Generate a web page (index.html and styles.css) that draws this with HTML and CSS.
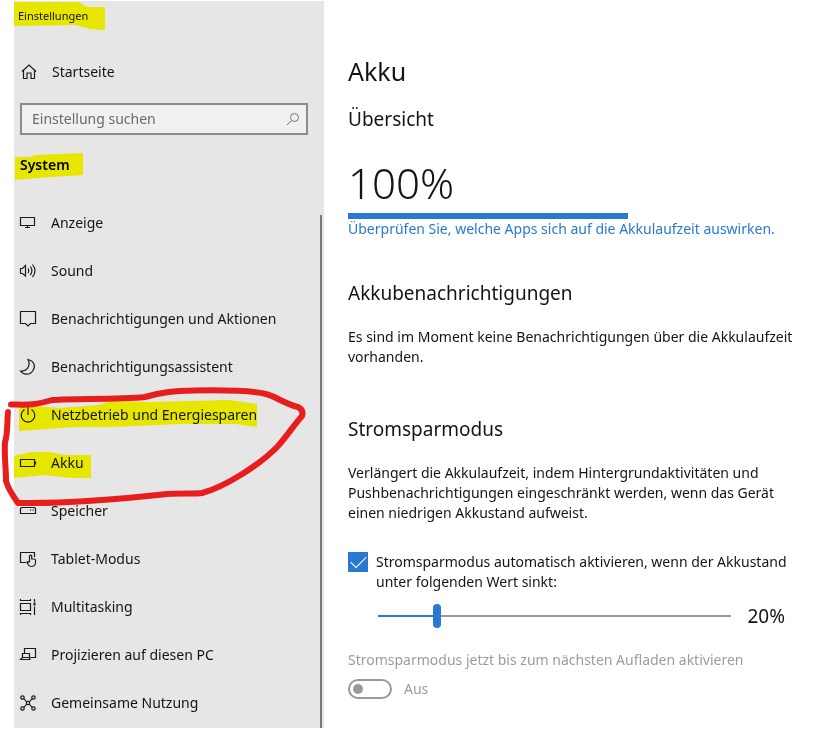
FILE: index.html
```html
<!DOCTYPE html>
<html lang="de">
<head>
<meta charset="utf-8">
<title>Einstellungen</title>
<meta name="viewport" content="width=device-width, initial-scale=1">
<link rel="stylesheet" href="styles.css">
</head>
<body>
<div class="window">
  <aside class="sidebar">
    <div class="app-title">Einstellungen</div>
    <a class="home" href="#">
      <svg class="icon" viewBox="0 0 18 18"><path d="M2 8.500 9 2l7 6.500M3.500 7.500V15.500H7V10h4v5.500h3.500V7.500"/></svg>
      <span>Startseite</span>
    </a>
    <div class="search">
      <input class="search-input" type="search" placeholder="Einstellung suchen" aria-label="Einstellung suchen">
      <svg class="search-icon" viewBox="0 0 14 14"><circle cx="8.500" cy="5.500" r="4"/><path d="M5.500 8.500 1 13"/></svg>
    </div>
    <h2 class="category">System</h2>
    <div class="nav-area">
      <nav class="nav">
        <a class="nav-item" href="#"><svg class="icon" viewBox="0 0 18 18"><path d="M1.500 3.500h14v8h-14zM8.500 11.500v2M6 13.500h5"/></svg><span>Anzeige</span></a>
        <a class="nav-item" href="#"><svg class="icon" viewBox="0 0 18 18"><path d="M1.500 6.500H3.500L6.500 3.500V14L3.500 11.500H1.500zM9 6.500q1.500 2.300 0 4.600M11.300 4.500q3.200 4.300 0 8.600M13.500 2.500q5 6.300 0 12.600"/></svg><span>Sound</span></a>
        <a class="nav-item" href="#"><svg class="icon" viewBox="0 0 18 18"><path d="M1.500 1.500h15v12H11.500L9 16 6.500 13.500H1.500z"/></svg><span>Benachrichtigungen und Aktionen</span></a>
        <a class="nav-item" href="#"><svg class="icon" viewBox="0 0 18 18"><path d="M9 1.500C15 3 17 8 14 12.500C11 17.200 4.500 17.500 1.500 13C8 13.500 12 8 9 1.500z"/></svg><span>Benachrichtigungsassistent</span></a>
        <a class="nav-item" href="#"><svg class="icon" viewBox="0 0 18 18"><path d="M9 1v8M5.500 3.500a6.800 6.800 0 1 0 7 0"/></svg><span>Netzbetrieb und Energiesparen</span></a>
        <a class="nav-item" href="#" aria-current="page"><svg class="icon" viewBox="0 0 18 18"><path d="M1.500 5.500h14v7h-14zM16.500 7.500v3"/></svg><span>Akku</span></a>
        <a class="nav-item" href="#"><svg class="icon" viewBox="0 0 18 18"><path d="M1.500 6.500 2.500 5.500H15.500L16.500 6.500V11.500H1.500zM11.500 7.500v1.200M14 7.500v1.200"/></svg><span>Speicher</span></a>
        <a class="nav-item" href="#"><svg class="icon" viewBox="0 0 18 18"><path d="M7 12.500H1.500v-10h14V7M10.500 12V5.700q1.200-1.200 2.200 0V9h2.800q1 0 1 1.200V13q-.5 3.500-4 3.500-2 0-3-1.500L8 12.200q.8-1.200 2.500.3"/></svg><span>Tablet-Modus</span></a>
        <a class="nav-item" href="#"><svg class="icon" viewBox="0 0 18 18"><path d="M1.500 1v1.500h10V1M1.500 5.500h10v7h-10zM1.500 17v-1.500h10V17M15.500 1v3M15.500 8.500V17"/><path d="M14.500 6h2" class="thick"/></svg><span>Multitasking</span></a>
        <a class="nav-item" href="#"><svg class="icon" viewBox="0 0 18 18"><path d="M5.500 7V2.500h11v9h-5M3.500 7.500h7v4h-7zM3.500 11.500 1.500 13.500h9.500l-.5-2"/></svg><span>Projizieren auf diesen PC</span></a>
        <a class="nav-item" href="#"><svg class="icon" viewBox="0 0 18 18"><circle cx="3.500" cy="3.500" r="1.700"/><circle cx="14.500" cy="3.500" r="1.700"/><circle cx="3.500" cy="14.500" r="1.700"/><circle cx="14.500" cy="14.500" r="1.700"/><circle cx="9" cy="9" r="1.700"/><path d="M4.700 4.700 7.800 7.800M13.300 4.700 10.200 7.800M4.700 13.300 7.800 10.200M13.300 13.300 10.200 10.200"/></svg><span>Gemeinsame Nutzung</span></a>
      </nav>
      <div class="scrollbar"></div>
    </div>
  </aside>

  <main class="content">
    <h1>Akku</h1>
    <section class="overview">
      <h2>Übersicht</h2>
      <div class="level">100%</div>
      <div class="level-bar"></div>
      <a class="link" href="#">Überprüfen Sie, welche Apps sich auf die Akkulaufzeit auswirken.</a>
    </section>
    <section class="notices">
      <h2>Akkubenachrichtigungen</h2>
      <p>Es sind im Moment keine Benachrichtigungen über die Akkulaufzeit vorhanden.</p>
    </section>
    <section class="saver">
      <h2>Stromsparmodus</h2>
      <p>Verlängert die Akkulaufzeit, indem Hintergrundaktivitäten und Pushbenachrichtigungen eingeschränkt werden, wenn das Gerät einen niedrigen Akkustand aufweist.</p>
      <label class="check"><input type="checkbox" checked><span>Stromsparmodus automatisch aktivieren, wenn der Akkustand unter folgenden Wert sinkt:</span></label>
      <div class="slider-row">
        <input class="slider" id="threshold" type="range" min="5" max="100" value="20" aria-label="Akkustand">
        <output for="threshold">20%</output>
      </div>
      <label class="toggle-label" for="saver-now">Stromsparmodus jetzt bis zum nächsten Aufladen aktivieren</label>
      <div class="toggle-row">
        <input class="toggle" id="saver-now" type="checkbox" role="switch" disabled>
        <span>Aus</span>
      </div>
    </section>
  </main>

  <svg class="ink highlighter" width="340" height="729" viewBox="0 0 340 729" aria-hidden="true">
    <path d="M14 2 78 2 88 7 105 7V30L90 29 76 25 14 26z"/>
    <path d="M15 157 30 157 36 155 60 154 83 153V175L70 176 50 177 15 180z"/>
    <path d="M19 405 60 408 98 405 112 401 150 402 228 400 257 404V427L235 424 180 424 112 427 75 427 19 431z"/>
    <path d="M14 456 30 452 50 452 65 455 91 455V478L72 478 44 475 14 478z"/>
  </svg>
  <svg class="ink pen" width="340" height="729" viewBox="0 0 340 729" aria-hidden="true">
    <path d="M11 404.500C25 404.500 32 406 52 400C75 398 115 400 145 397C162 392 174 391 195 390.500C225 390 250 390 266 394C275 396 285 404 298 407Q304 410 302 416C294 425 287 436 278 446C261 464 225 487 202 493C195 494 180 493 167 494C130 498 70 503 30 503H18C13 496 8 488 6 481C6 468 4 454 5 442C8 434 7 420 8 412"/>
  </svg>
</div>
</body>
</html>
```

FILE: styles.css
```css
* {
  box-sizing: border-box;
}

body {
  margin: 0;
  background: #fff;
  color: #141414;
  font: 14px/20px "Noto Sans", "Open Sans", sans-serif;
}

h1,
h2,
p {
  margin: 0;
  font-weight: 400;
}

a {
  color: inherit;
  text-decoration: none;
}

.window {
  position: relative;
  display: grid;
  grid-template-columns: 310px 1fr;
  min-height: 100vh;
  padding: 1px 0 1px 14px;
}

/* Sidebar */
.sidebar {
  display: flex;
  flex-direction: column;
  background: #e6e6e6;
}

.app-title {
  padding: 5px 4px 4px;
  font-size: 11px;
}

.home {
  display: flex;
  align-items: center;
  gap: 14px;
  height: 48px;
  margin-top: 18px;
  padding-left: 6px;
}

.icon {
  flex: none;
  width: 18px;
  height: 18px;
  fill: none;
  stroke: #1c1c1c;
  stroke-width: 1.2;
}

.icon .thick {
  stroke-width: 3;
}

.search {
  display: flex;
  align-items: center;
  height: 32px;
  margin: 7px 16px 0 6px;
  padding: 0 6px 0 10px;
  background: #f0f0f0;
  border: 2px solid #8c8c8c;
}

.search-input {
  flex: 1;
  min-width: 0;
  padding: 0;
  border: 0;
  outline: 0;
  background: none;
  font: inherit;
}

.search-input::placeholder {
  color: #6b6b6b;
}

.search-icon {
  width: 14px;
  height: 14px;
  fill: none;
  stroke: #757575;
}

.category {
  padding: 20px 6px;
  font-size: 14px;
  font-weight: 600;
  color: #000;
}

.nav-area {
  display: flex;
  flex: 1;
  margin-top: 4px;
}

.nav {
  flex: 1;
}

.nav-item {
  display: flex;
  align-items: center;
  gap: 14px;
  height: 48px;
  padding-left: 5px;
}

.scrollbar {
  width: 2px;
  margin: 16px 2px 0 0;
  background: #7a7a7a;
}

/* Content */
.content {
  max-width: 520px;
  padding: 52px 40px 20px 24px;
}

h1 {
  font-size: 25px;
  line-height: 36px;
}

.content h2 {
  font-size: 19px;
  line-height: 28px;
}

.overview {
  margin-top: 16px;
}

.level {
  margin-top: 20px;
  font-size: 42px;
  font-weight: 300;
  line-height: 60px;
}

.level-bar {
  width: 280px;
  max-width: 100%;
  height: 6px;
  background: #2879d0;
}

.link {
  display: block;
  color: #2879d0;
}

.notices {
  margin-top: 40px;
}

.content p {
  margin-top: 20px;
}

.saver {
  margin-top: 48px;
}

.check {
  display: flex;
  gap: 8px;
  margin-top: 29px;
}

.check input {
  flex: none;
  appearance: none;
  display: grid;
  place-items: center;
  width: 20px;
  height: 20px;
  margin: 0;
  background: #2879d0;
}

.check input:checked::after {
  content: "";
  width: 14px;
  height: 7px;
  margin-bottom: 4px;
  border: solid #fff;
  border-width: 0 0 1px 1px;
  transform: rotate(-45deg);
}

.slider-row {
  display: flex;
  align-items: center;
  gap: 16px;
  margin-top: 10px;
  padding: 0 14px 0 30px;
}

.slider {
  flex: 1;
  min-width: 0;
  height: 28px;
  margin: 0;
  appearance: none;
  background: linear-gradient(#2879d0, #2879d0) left center / 16% 2px no-repeat,
    linear-gradient(#999, #999) left center / 100% 2px no-repeat;
}

.slider::-webkit-slider-thumb {
  appearance: none;
  width: 8px;
  height: 24px;
  border-radius: 4px;
  background: #2879d0;
}

.slider-row output {
  font-size: 19px;
  line-height: 28px;
}

.toggle-label {
  display: block;
  margin-top: 20px;
  color: #9c9c9c;
}

.toggle-row {
  display: flex;
  align-items: center;
  gap: 12px;
  margin-top: 9px;
  color: #9c9c9c;
}

.toggle {
  appearance: none;
  display: flex;
  align-items: center;
  width: 44px;
  height: 20px;
  margin: 0;
  padding-left: 3px;
  border: 2px solid #999;
  border-radius: 10px;
}

.toggle::before {
  content: "";
  width: 10px;
  height: 10px;
  border-radius: 50%;
  background: #999;
}

/* Freehand marks drawn over the window */
.ink {
  position: absolute;
  top: 0;
  left: 0;
  pointer-events: none;
}

.highlighter {
  fill: #ff0;
  mix-blend-mode: multiply;
}

.pen {
  fill: none;
  stroke: #e81e1e;
  stroke-width: 6;
  stroke-linecap: round;
  stroke-linejoin: round;
}
```
